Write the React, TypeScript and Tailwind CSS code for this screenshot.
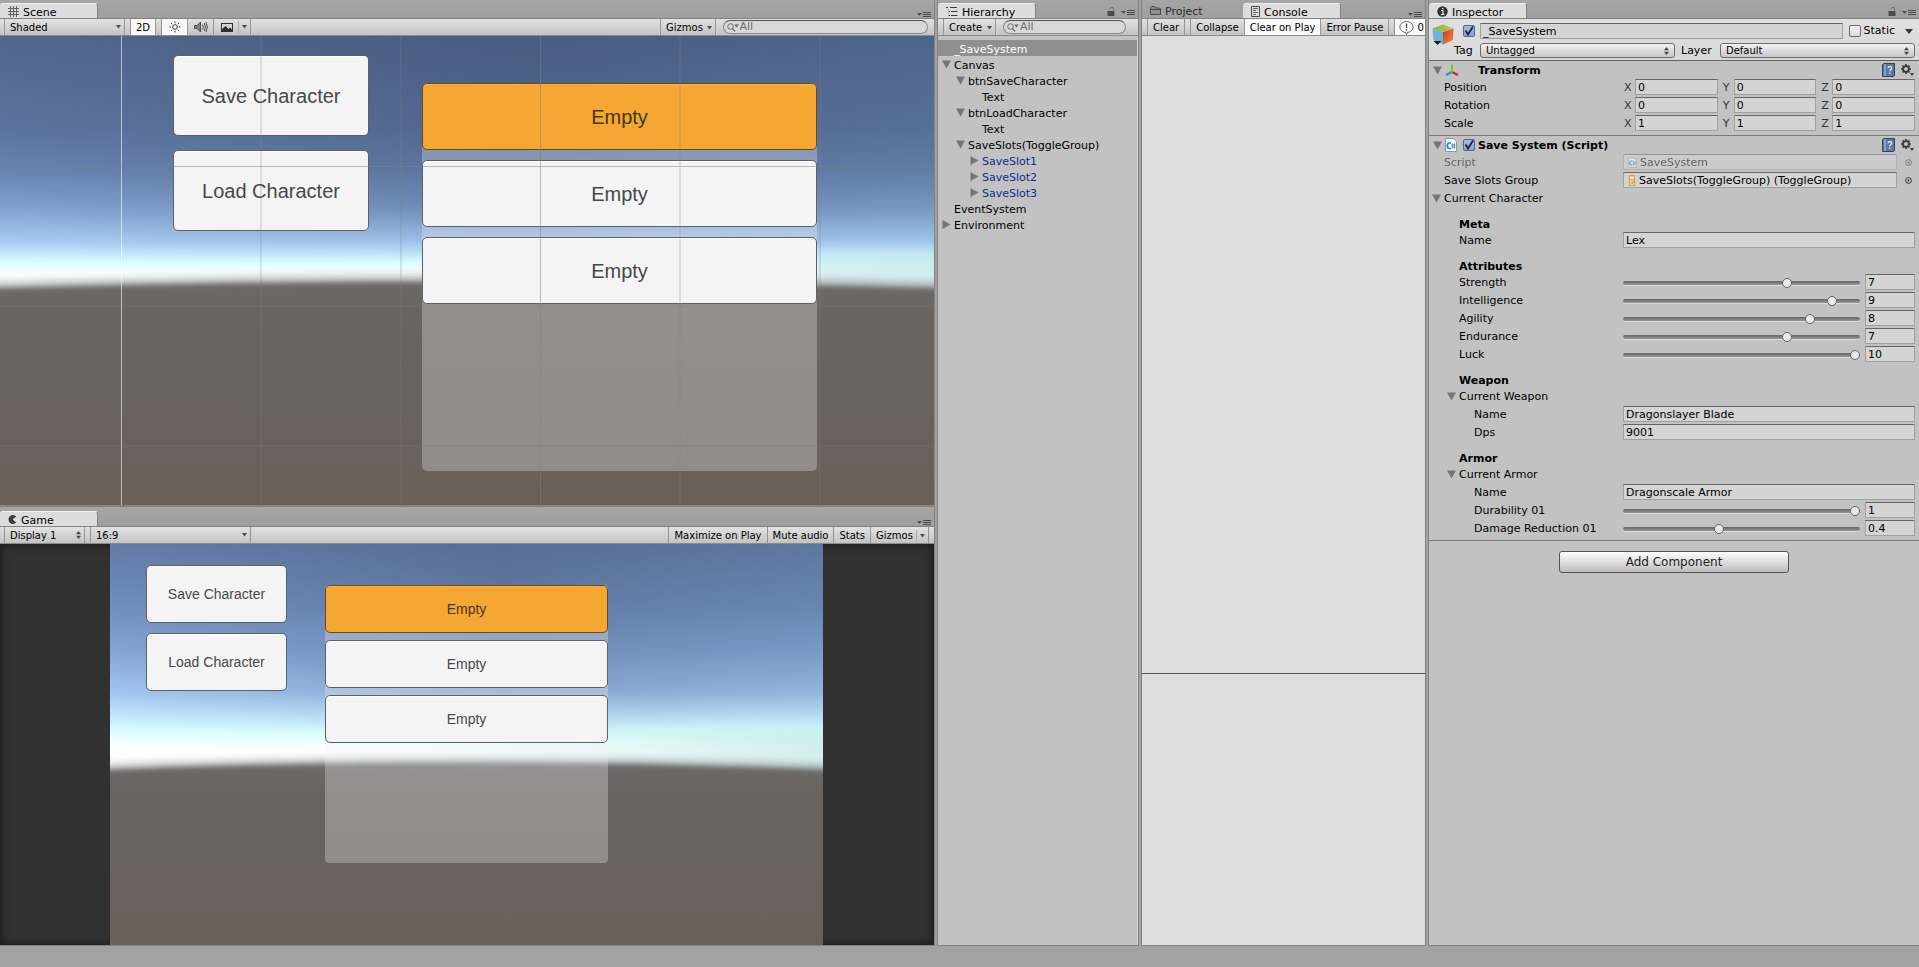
import React, { useId, type ReactNode } from 'react';

/* ---------- icons ---------- */

const Caret = ({ className = 'text-[#4a4a4a]' }: { className?: string }) => (
  <svg width="5" height="4" viewBox="0 0 5 4" className={className} aria-hidden="true">
    <path d="M0 0h5L2.5 3.5z" fill="currentColor" />
  </svg>
);

const UpDown = () => (
  <svg width="5" height="8" viewBox="0 0 5 8" aria-hidden="true">
    <path d="M0 3.2h5L2.5 0zM0 4.8h5L2.5 8z" fill="#4a4a4a" />
  </svg>
);

const Fold = ({ open }: { open: boolean }) => (
  <svg width="9" height="9" viewBox="0 0 9 9" aria-hidden="true">
    <path d={open ? 'M0 0.5h9L4.5 8.5z' : 'M0.5 0v9L8.5 4.5z'} fill="#757575" />
  </svg>
);

const GridIcon = () => (
  <svg width="11" height="11" viewBox="0 0 11 11" stroke="#4c4c4c" aria-hidden="true">
    <path d="M2.5 0v11M5.5 0v11M8.5 0v11M0 2.5h11M0 5.5h11M0 8.5h11" opacity="0.85" />
  </svg>
);

const PacIcon = () => (
  <svg width="9" height="9" viewBox="0 0 9 9" aria-hidden="true">
    <path d="M8.2 1.6A4.4 4.4 0 1 0 8.2 7.4L4.6 4.5z" fill="#3c3c3c" />
  </svg>
);

const TreeIcon = () => (
  <svg width="12" height="9" viewBox="0 0 12 9" stroke="#3c3c3c" aria-hidden="true">
    <path d="M0 0.5h2M4 0.5h7M2.5 4.5h1.5M5 4.5h6.5M2.5 8.5h1.5M5 8.5h6.5" />
    <path d="M2.5 2v1M2.5 6v1" opacity="0.5" />
  </svg>
);

const FolderIcon = () => (
  <svg width="11" height="9" viewBox="0 0 11 9" aria-hidden="true">
    <path d="M0.5 8.5V1.5L1.5 0.5h3l1 1.5h4l1 1v5.500z" fill="#8f8f8f" stroke="#4a4a4a" />
    <path d="M1 3.5h9" stroke="#4a4a4a" />
  </svg>
);

const PageIcon = () => (
  <svg width="9" height="11" viewBox="0 0 9 11" fill="none" stroke="#4a4a4a" aria-hidden="true">
    <path d="M0.5 0.5h8v10h-8z" />
    <path d="M2 2.5h5M2 4.5h3M2 6.5h5M2 8.5h3" opacity="0.8" />
  </svg>
);

const InfoIcon = () => (
  <svg width="11" height="11" viewBox="0 0 11 11" aria-hidden="true">
    <circle cx="5.5" cy="5.5" r="5.2" fill="#333" />
    <path d="M4 4.5h2V8.5M4 8.5h3.500M5 2.5h1.500" stroke="#eee" strokeWidth="1.2" fill="none" />
  </svg>
);

const LockIcon = () => (
  <svg width="8" height="9" viewBox="0 0 8 9" aria-hidden="true">
    <path d="M0.5 4h7v5h-7z" fill="#4c4c4c" />
    <path d="M6.500 4.500V2.500a1.700 1.900 0 0 0-3.600-0.600" stroke="#6a6a6a" fill="none" />
  </svg>
);

const MenuIcon = () => (
  <svg width="14" height="6" viewBox="0 0 14 6" aria-hidden="true">
    <path d="M0 1h5L2.5 3.8z" fill="#4a4a4a" />
    <path d="M6 0.5h8M6 2.5h8M6 4.5h8" stroke="#4a4a4a" />
  </svg>
);

const SunIcon = () => (
  <svg width="12" height="12" viewBox="0 0 12 12" fill="none" stroke="#3a3a3a" aria-hidden="true">
    <circle cx="6" cy="6" r="2.3" />
    <path d="M6 0.500v1.700M6 9.800v1.700M0.500 6h1.700M9.800 6h1.700M2.100 2.100l1.200 1.200M8.700 8.700l1.200 1.200M2.100 9.900l1.200-1.200M8.700 3.300l1.200-1.200" />
  </svg>
);

const SpeakerIcon = () => (
  <svg width="14" height="12" viewBox="0 0 14 12" fill="none" stroke="#4c4c4c" aria-hidden="true">
    <path d="M0.500 4.500h2.500L6.500 1v10L3 7.500H0.500z" fill="#808080" />
    <path d="M8.500 3.500q1.500 2.500 0 5M10.300 2q2.300 4 0 8M12 1q2.800 5 0 10" />
  </svg>
);

const ImageIcon = () => (
  <svg width="12" height="9" viewBox="0 0 12 9" aria-hidden="true">
    <path d="M0 0h12v9H0z" fill="#2f2f2f" />
    <path d="M1 1h10v5.500L9 4.500 7.500 6 4.500 3 1 6z" fill="#d4d4d4" />
  </svg>
);

const SearchIcon = () => (
  <svg width="12" height="9" viewBox="0 0 12 9" fill="none" stroke="#6c6c6c" className="shrink-0" aria-hidden="true">
    <circle cx="3.5" cy="3.5" r="2.8" />
    <path d="M5.5 5.5L8 8.5" strokeWidth="1.3" />
    <path d="M7 1.5h5L9.5 4.5z" fill="#6c6c6c" stroke="none" />
  </svg>
);

const CubeIcon = () => (
  <svg width="22" height="22" viewBox="0 0 22 22" aria-hidden="true">
    <defs>
      <linearGradient id="cubeRight" x1="0" y1="0" x2="1" y2="1">
        <stop offset="0" stopColor="#c43c10" />
        <stop offset="1" stopColor="#f58a4c" />
      </linearGradient>
      <linearGradient id="cubeTop" x1="0" y1="0" x2="1" y2="0">
        <stop offset="0" stopColor="#8fae3c" />
        <stop offset="1" stopColor="#b5cf55" />
      </linearGradient>
    </defs>
    <path d="M0.5 4.5L11 8v12.500L1.500 16z" fill="#6cb4dc" />
    <path d="M21.500 4.500L11 8v12.500L21 16z" fill="url(#cubeRight)" />
    <path d="M0.500 4.500L11 0.500l10.500 4L11 8z" fill="url(#cubeTop)" />
    <path d="M1.500 17h8L5.500 21z" fill="#1e1e1e" />
  </svg>
);

const AxesIcon = () => (
  <svg width="14" height="13" viewBox="0 0 14 13" strokeWidth="2" fill="none" aria-hidden="true">
    <path d="M7 8L1 11" stroke="#2a8fd0" />
    <path d="M7 8l6 3" stroke="#d8201c" />
    <path d="M7 8.500V0.500" stroke="#84c41c" />
  </svg>
);

const ScriptIcon = ({ size = 'w-[12px] h-[14px]' }: { size?: string }) => (
  <svg viewBox="0 0 12 14" className={size} aria-hidden="true">
    <path d="M0.500 0.500h8l3 3v10h-11z" fill="#f4f8fa" stroke="#8b9aa3" />
    <path d="M6 5H4.500a2 2.500 0 0 0 0 5.500H6" fill="none" stroke="#1c88b8" strokeWidth="1.6" />
    <path d="M7.500 5.500v5M9.500 5.500v5M6.500 7h4M6.500 9h4" stroke="#1c88b8" strokeWidth="0.8" />
  </svg>
);

const ToggleGroupIcon = () => (
  <svg width="8" height="11" viewBox="0 0 8 11" className="shrink-0" aria-hidden="true">
    <path d="M1.500 0.800h5v9.500h-5zM1.500 5h5" fill="#ececec" stroke="#e8a33c" strokeWidth="1.4" />
    <path d="M3 7.500l1 1 1.500-2" stroke="#666" fill="none" />
  </svg>
);

const HelpBookIcon = () => (
  <svg width="13" height="14" viewBox="0 0 13 14" aria-hidden="true">
    <path d="M0.500 1.500L2 0.500h10.500v12L11 13.500H0.500z" fill="#5f789f" stroke="#33435e" />
    <path d="M3 1v12" stroke="#c9d6e8" strokeWidth="0.8" />
    <path d="M6 5.200c0-2.200 3.600-2.200 3.600 0 0 1.500-1.800 1.500-1.800 3M7.800 9.600v1.400" stroke="#eef3fa" strokeWidth="1.2" fill="none" />
  </svg>
);

const GearIcon = () => (
  <svg width="13" height="12" viewBox="0 0 13 12" aria-hidden="true">
    <g stroke="#3a3a3a" fill="none" strokeWidth="1.7">
      <circle cx="5" cy="5" r="2.9" />
      <path d="M5 0v2M5 8v2M0 5h2M8 5h2M1.500 1.500l1.300 1.300M7.200 7.200l1.300 1.300M1.500 8.500l1.300-1.300M7.200 2.800l1.300-1.300" />
    </g>
    <path d="M9 9h4l-2 3z" fill="#3a3a3a" />
  </svg>
);

const PickerIcon = () => (
  <svg width="7" height="7" viewBox="0 0 7 7" aria-hidden="true">
    <circle cx="3.500" cy="3.500" r="2.900" fill="none" stroke="#2a2a2a" strokeWidth="0.9" />
    <circle cx="3.500" cy="3.500" r="0.900" fill="#2a2a2a" />
  </svg>
);

const WarnBubble = () => (
  <svg width="15" height="14" viewBox="0 0 15 14" aria-hidden="true">
    <ellipse cx="7.500" cy="6" rx="6.700" ry="5.500" fill="#fff" stroke="#5a5a5a" strokeWidth="0.9" />
    <path d="M6 11l1.500 2.500L9 11" fill="#fff" stroke="#5a5a5a" strokeWidth="0.9" />
    <path d="M7.500 2.500v4.500M7.500 8.200v1.500" stroke="#555" strokeWidth="1.5" />
  </svg>
);

/* ---------- dock chrome ---------- */

const Tab = ({ icon, label, active = false }: { icon: ReactNode; label: string; active?: boolean }) => (
  <button
    type="button"
    role="tab"
    aria-selected={active}
    className={
      active
        ? 'flex h-[15px] w-[98px] items-center gap-1 rounded-t-[3px] border-t border-r border-t-[#eeeeee] border-r-[#828282] bg-linear-to-b from-[#dcdcdc] to-[#dedede] pl-2 text-[11px] leading-[13px]'
        : 'flex h-[15px] w-[101px] items-center gap-1 pl-2 text-[11px] leading-[13px] text-[#2c2c2c]'
    }
  >
    {icon}
    <span className="pt-0.5">{label}</span>
  </button>
);

const Strip = ({ children, lock = false }: { children: ReactNode; lock?: boolean }) => (
  <div className="flex h-[19px] shrink-0 items-end justify-between border-b border-[#828282] bg-linear-to-b from-[#a5a5a5] to-[#9f9f9f]">
    <div role="tablist" className="flex">
      {children}
    </div>
    <div className="flex items-center gap-1.5 pr-[3px]">
      {lock && (
        <button type="button" aria-label="Lock" className="pb-0.5">
          <LockIcon />
        </button>
      )}
      <button type="button" aria-label="Panel menu">
        <MenuIcon />
      </button>
    </div>
  </div>
);

const Toolbar = ({ children }: { children: ReactNode }) => (
  <div className="flex h-[17px] shrink-0 items-stretch overflow-hidden border-b border-[#8a8a8a] bg-linear-to-b from-[#e2e2e2] to-[#c3c3c3] pl-1 text-[10px] leading-[15px] whitespace-nowrap">
    {children}
  </div>
);

const toolBtn = 'flex shrink-0 items-center justify-center border-r border-[#959595] px-[5px] pt-px';
const toolBtnFirst = 'flex shrink-0 items-center justify-center border-x border-[#959595] px-[5px] pt-px';

const ToolSelect = ({
  label,
  value,
  width,
  arrow,
}: {
  label: string;
  value: string;
  width: string;
  arrow: ReactNode;
}) => (
  <div className={`relative shrink-0 border-x border-[#959595] ${width}`}>
    <select
      aria-label={label}
      className="h-full w-full appearance-none bg-transparent pt-px pl-[5px] text-[10px] leading-[15px] outline-none"
    >
      <option>{value}</option>
    </select>
    <span className="pointer-events-none absolute inset-y-0 right-[3px] flex items-center">{arrow}</span>
  </div>
);

const Search = ({ label, width }: { label: string; width: string }) => (
  <label
    className={`my-px flex items-center gap-px rounded-full border border-[#8a8a8a] border-t-[#555] bg-[#d8d8d8] pl-[3px] ${width}`}
  >
    <SearchIcon />
    <input
      type="text"
      aria-label={label}
      placeholder="All"
      className="w-full min-w-0 bg-transparent text-[11px] leading-3 outline-none placeholder:text-[#6e6e6e]"
    />
  </label>
);

/* ---------- rendered world ---------- */

type SkyProps = { id: 'scene' | 'game'; edge: number; peak: number; haze: number };

const skyStops: Record<'scene' | 'game', [number, string][]> = {
  scene: [
    [0, '#51668d'],
    [0.38, '#5b739e'],
    [0.56, '#6983b0'],
    [0.72, '#82a2d0'],
    [0.86, '#a8ccf3'],
    [0.92, '#cbeeff'],
    [0.95, '#dcffff'],
    [1, '#ffffff'],
  ],
  game: [
    [0, '#637ca8'],
    [0.3, '#718ebc'],
    [0.52, '#86a5d4'],
    [0.72, '#a3c6f0'],
    [0.82, '#bfe3fe'],
    [0.91, '#dcffff'],
    [1, '#ffffff'],
  ],
};

const Sky = ({ id, edge, peak, haze }: SkyProps) => {
  const horizon = (lift: number) =>
    `M-50 ${edge - lift}Q500 ${2 * peak - edge - lift} 1050 ${edge - lift}V1100H-50z`;
  return (
    <svg
      viewBox="0 0 1000 1000"
      preserveAspectRatio="none"
      className="absolute inset-0 h-full w-full"
      aria-hidden="true"
    >
      <defs>
        <linearGradient id={`${id}-sky`} gradientUnits="userSpaceOnUse" x1="0" y1="0" x2="0" y2={haze}>
          {skyStops[id].map(([o, c]) => (
            <stop key={o} offset={o} stopColor={c} />
          ))}
        </linearGradient>
        <linearGradient id={`${id}-shade`} x1="0" y1="0" x2="1" y2="0">
          <stop offset="0" stopColor="#33425e" stopOpacity="0" />
          <stop offset="0.55" stopColor="#33425e" stopOpacity="0.26" />
          <stop offset="1" stopColor="#3f5c78" stopOpacity="0.16" />
        </linearGradient>
        <linearGradient id={`${id}-fade`} x1="0" y1="0" x2="0" y2="1">
          <stop offset="0" stopColor="#fff" />
          <stop offset="0.7" stopColor="#fff" />
          <stop offset="0.95" stopColor="#000" />
        </linearGradient>
        <mask id={`${id}-mask`}>
          <rect width="1000" height={haze} fill={`url(#${id}-fade)`} />
        </mask>
        <linearGradient id={`${id}-tint`} x1="0" y1="0" x2="1" y2="0">
          <stop offset="0.45" stopColor="#c6ecec" stopOpacity="0" />
          <stop offset="1" stopColor="#c2e6e6" stopOpacity="0.7" />
        </linearGradient>
        <linearGradient id={`${id}-ground`} gradientUnits="userSpaceOnUse" x1="0" y1={peak} x2="0" y2="1000">
          <stop offset="0" stopColor="#6c6867" />
          <stop offset="0.2" stopColor="#69635d" />
          <stop offset="1" stopColor="#6a605a" />
        </linearGradient>
        <filter id={`${id}-soft`} x="-5%" y="-10%" width="110%" height="120%">
          <feGaussianBlur stdDeviation="0 6" />
        </filter>
        <filter id={`${id}-softer`} x="-5%" y="-10%" width="110%" height="120%">
          <feGaussianBlur stdDeviation="0 10" />
        </filter>
      </defs>
      <rect width="1000" height="1000" fill={`url(#${id}-sky)`} />
      <rect width="1000" height={haze} fill={`url(#${id}-shade)`} mask={`url(#${id}-mask)`} />
      <rect y={haze * 0.9} width="1000" height="200" fill={`url(#${id}-tint)`} filter={`url(#${id}-softer)`} />
      <path d={horizon(22)} fill="#7d8483" fillOpacity="0.6" filter={`url(#${id}-softer)`} />
      <path d={horizon(10)} fill={`url(#${id}-ground)`} filter={`url(#${id}-soft)`} />
    </svg>
  );
};

const SceneGrid = () => (
  <svg
    viewBox="0 0 934 469"
    preserveAspectRatio="none"
    className="pointer-events-none absolute inset-0 h-full w-full"
    aria-hidden="true"
  >
    <path d="M121.500 0V469" stroke="#ffffff" strokeOpacity="0.6" />
    <path d="M261 0V469M401 0V469M680 0V469M820 0V469" stroke="#808080" strokeOpacity="0.2" strokeWidth="2" />
    <path d="M540.500 0V469M0 130.500H934" stroke="#808080" strokeOpacity="0.5" />
    <path d="M0 270H934M0 410H934" stroke="#808080" strokeOpacity="0.18" strokeWidth="2" />
  </svg>
);

const uiButton =
  'flex w-full items-center justify-center rounded-[5px] border border-[#5e6064] bg-[#f4f4f4] text-[#484848] shadow-[inset_0_1px_0_#ffffff]';
const uiSlotOn =
  'flex w-full items-center justify-center rounded-[5px] border border-[#6b4a1c] bg-[#f5a733] text-[#433620] shadow-[inset_0_1px_0_#ffb440]';

const slots = ['SaveSlot1', 'SaveSlot2', 'SaveSlot3'];

const CanvasUi = ({ size }: { size: 'scene' | 'game' }) => {
  const scene = size === 'scene';
  return (
    <div
      className={
        scene
          ? "relative grid grid-cols-[173fr_196fr_53fr_395fr_117fr] items-start font-['Liberation_Sans',Arial,sans-serif] text-[20px] leading-6"
          : "relative grid grid-cols-[36fr_141fr_38fr_283fr_215fr] items-start font-['Liberation_Sans',Arial,sans-serif] text-[14px] leading-4"
      }
    >
      <div className={scene ? 'col-start-2 flex flex-col gap-3.5 pt-[19px]' : 'col-start-2 flex flex-col gap-2.5 pt-[21px]'}>
        {['Save Character', 'Load Character'].map((t) => (
          <button key={t} type="button" className={`${uiButton} ${scene ? 'h-[81px]' : 'h-[58px]'}`}>
            {t}
          </button>
        ))}
      </div>
      <div className={scene ? 'col-start-4 pt-[47px]' : 'col-start-4 pt-[41px]'}>
        <div
          className={
            scene
              ? 'flex h-[388px] flex-col gap-2.5 rounded-[5px] bg-[#f0f2f4]/30'
              : 'flex h-[278px] flex-col gap-[7px] rounded-[4px] bg-[#f0f2f4]/30'
          }
        >
          {slots.map((s, i) => (
            <button
              key={s}
              type="button"
              aria-pressed={i === 0}
              className={`${i === 0 ? uiSlotOn : uiButton} ${scene ? 'h-[67px]' : 'h-[48px]'}`}
            >
              Empty
            </button>
          ))}
        </div>
      </div>
    </div>
  );
};

/* ---------- panels ---------- */

const ScenePanel = () => (
  <section className="flex min-h-0 flex-col border-r border-[#828282]">
    <Strip>
      <Tab icon={<GridIcon />} label="Scene" active />
    </Strip>
    <Toolbar>
      <ToolSelect label="Draw mode" value="Shaded" width="w-[121px]" arrow={<Caret />} />
      <button type="button" className="ml-[5px] w-[26px] shrink-0 border-x border-[#959595] bg-[#f8f8f8] pt-px">
        2D
      </button>
      <button
        type="button"
        aria-label="Scene lighting"
        className="ml-[5px] flex w-[27px] shrink-0 items-center justify-center border-x border-[#959595] bg-[#f8f8f8]"
      >
        <SunIcon />
      </button>
      <button type="button" aria-label="Scene audio" className="flex w-[26px] shrink-0 items-center justify-center border-r border-[#959595]">
        <SpeakerIcon />
      </button>
      <button
        type="button"
        aria-label="Scene effects"
        className="flex w-[37px] shrink-0 items-center justify-between border-r border-[#959595] pr-[3px] pl-[7px]"
      >
        <ImageIcon />
        <span className="flex h-3 items-center border-l border-[#a8a8a8] pl-[3px]">
          <Caret />
        </span>
      </button>
      <div className="flex-1" />
      <button type="button" className="flex w-[56px] shrink-0 items-center justify-between border-x border-[#959595] pt-px pr-[3px] pl-[5px]">
        Gizmos <Caret />
      </button>
      <div className="flex w-[218px] justify-center">
        <Search label="Search scene" width="w-[205px]" />
      </div>
    </Toolbar>
    <div className="relative min-h-0 flex-1 overflow-hidden border-b-2 border-[#828282]">
      <Sky id="scene" edge={551} peak={534} haze={510} />
      <CanvasUi size="scene" />
      <SceneGrid />
    </div>
  </section>
);

const GamePanel = () => (
  <section className="flex min-h-0 flex-col border-r border-[#828282] pt-px">
    <Strip>
      <Tab icon={<PacIcon />} label="Game" active />
    </Strip>
    <Toolbar>
      <ToolSelect label="Display" value="Display 1" width="w-[81px]" arrow={<UpDown />} />
      <div className="w-[5px] shrink-0" />
      <ToolSelect label="Aspect ratio" value="16:9" width="w-[161px]" arrow={<Caret />} />
      <div className="flex-1" />
      <button type="button" className={toolBtnFirst}>
        Maximize on Play
      </button>
      <button type="button" className={toolBtn}>
        Mute audio
      </button>
      <button type="button" className={toolBtn}>
        Stats
      </button>
      <button
        type="button"
        className="mr-[5px] flex w-[58px] shrink-0 items-center justify-between border-r border-[#959595] pt-px pr-[3px] pl-[5px]"
      >
        Gizmos
        <span className="flex h-3 items-center border-l border-[#a8a8a8] pl-[3px]">
          <Caret />
        </span>
      </button>
    </Toolbar>
    <div className="grid min-h-0 flex-1 grid-cols-[110fr_713fr_111fr] border-b border-[#828282] bg-[#313131] shadow-[inset_0_0_10px_#161616]">
      <div className="relative col-start-2 overflow-hidden">
        <Sky id="game" edge={577} peak={556} haze={515} />
        <CanvasUi size="game" />
      </div>
    </div>
  </section>
);

type TreeNode = { name: string; depth: number; open?: boolean; prefab?: boolean; selected?: boolean };

const nodes: TreeNode[] = [
  { name: '_SaveSystem', depth: 0, selected: true },
  { name: 'Canvas', depth: 0, open: true },
  { name: 'btnSaveCharacter', depth: 1, open: true },
  { name: 'Text', depth: 2 },
  { name: 'btnLoadCharacter', depth: 1, open: true },
  { name: 'Text', depth: 2 },
  { name: 'SaveSlots(ToggleGroup)', depth: 1, open: true },
  { name: 'SaveSlot1', depth: 2, open: false, prefab: true },
  { name: 'SaveSlot2', depth: 2, open: false, prefab: true },
  { name: 'SaveSlot3', depth: 2, open: false, prefab: true },
  { name: 'EventSystem', depth: 0 },
  { name: 'Environment', depth: 0, open: false },
];

const depthPad = ['pl-1', 'pl-[18px]', 'pl-8'];

const HierarchyPanel = () => (
  <section className="flex min-h-0 flex-col border-x border-b border-[#828282]">
    <Strip lock>
      <Tab icon={<TreeIcon />} label="Hierarchy" active />
    </Strip>
    <Toolbar>
      <button
        type="button"
        className="ml-px flex w-[53px] shrink-0 items-center justify-between border-x border-[#959595] pt-px pr-[3px] pl-[5px]"
      >
        Create <Caret />
      </button>
      <div className="flex flex-1 pr-3 pl-[7px]">
        <Search label="Search hierarchy" width="flex-1" />
      </div>
    </Toolbar>
    <ul role="tree" aria-label="Hierarchy" className="min-h-0 flex-1 border-r border-[#d4d4d4] bg-[#c2c2c2] pt-1 text-[11px] leading-3">
      {nodes.map((n, i) => (
        <li
          key={i}
          role="treeitem"
          aria-expanded={n.open}
          aria-selected={!!n.selected}
          className={`flex h-4 items-center gap-[3px] ${depthPad[n.depth]} ${
            n.selected ? 'bg-[#8f8f8f] text-white' : n.prefab ? 'text-[#0a2f94]' : ''
          }`}
        >
          <span className="w-[9px]">{n.open !== undefined && <Fold open={n.open} />}</span>
          <span className="pt-1">{n.name}</span>
        </li>
      ))}
    </ul>
  </section>
);

const ConsolePanel = () => (
  <section className="flex min-h-0 flex-col border-x border-b border-[#828282]">
    <Strip>
      <Tab icon={<FolderIcon />} label="Project" />
      <Tab icon={<PageIcon />} label="Console" active />
    </Strip>
    <Toolbar>
      <button type="button" className={`${toolBtnFirst} ml-px`}>
        Clear
      </button>
      <button type="button" className={`${toolBtnFirst} ml-[5px]`}>
        Collapse
      </button>
      <button type="button" className={`${toolBtn} bg-[#fafafa]`}>
        Clear on Play
      </button>
      <button type="button" className={toolBtn}>
        Error Pause
      </button>
      <button
        type="button"
        className="ml-[5px] flex shrink-0 items-center gap-[3px] border-l border-[#959595] bg-[#f8f8f8] pt-px pr-2 pl-1"
      >
        <WarnBubble />0
      </button>
    </Toolbar>
    <div className="grid min-h-0 flex-1 grid-rows-[638fr_271fr] bg-[#dedede]">
      <div className="border-b border-[#555]" />
      <div />
    </div>
  </section>
);

const fieldCls =
  'h-4 w-full min-w-0 border border-[#a0a0a0] border-t-[#666] bg-[#d4d4d4] px-0.5 pt-px text-[11px] leading-[13px] outline-none';

const Check = ({ label, on }: { label: string; on: boolean }) => (
  <span className="relative flex h-3 w-3 shrink-0">
    <input
      type="checkbox"
      aria-label={label}
      defaultChecked={on}
      className="peer h-3 w-3 appearance-none rounded-[2px] border border-[#6a6a6a] bg-linear-to-b from-[#f2f2f2] to-[#dcdcdc] checked:border-[#53668a] checked:from-[#a4bade] checked:to-[#8aa5d2]"
    />
    <svg viewBox="0 0 12 12" className="pointer-events-none absolute inset-0 hidden peer-checked:block" aria-hidden="true">
      <path d="M2.5 5.5L5 9.5L10 1.5" fill="none" stroke="#1d2740" strokeWidth="1.9" />
    </svg>
  </span>
);

const Popup = ({ id, value }: { id: string; value: string }) => (
  <span className="relative flex h-[15px] flex-1">
    <select
      id={id}
      className="h-[15px] w-full appearance-none rounded-[3px] border border-[#6c6c6c] bg-linear-to-b from-[#f2f2f2] to-[#c8c8c8] pl-[5px] text-[10px] leading-3 outline-none"
    >
      <option>{value}</option>
    </select>
    <span className="pointer-events-none absolute inset-y-0 right-1.5 flex items-center">
      <UpDown />
    </span>
  </span>
);

const indentPad = ['pl-[15px]', 'pl-[30px]', 'pl-[45px]'];

const Row = ({
  label,
  htmlFor,
  indent = 0,
  muted = false,
  children,
}: {
  label: string;
  htmlFor?: string;
  indent?: number;
  muted?: boolean;
  children: ReactNode;
}) => (
  <div className={`mb-0.5 flex h-4 items-center ${muted ? 'opacity-50' : ''}`}>
    <label htmlFor={htmlFor} className={`w-[194px] shrink-0 truncate pt-0.5 ${indentPad[indent]}`}>
      {label}
    </label>
    {children}
  </div>
);

const TextRow = ({ label, value, indent }: { label: string; value: string; indent: number }) => {
  const id = useId();
  return (
    <Row label={label} indent={indent} htmlFor={id}>
      <input id={id} type="text" defaultValue={value} className={fieldCls} />
    </Row>
  );
};

const SliderRow = ({ label, value, max, indent }: { label: string; value: number; max: number; indent: number }) => {
  const id = useId();
  return (
    <Row label={label} indent={indent} htmlFor={id}>
      <input
        id={id}
        type="range"
        min={0}
        max={max}
        step="any"
        defaultValue={value}
        className="h-4 min-w-0 flex-1 appearance-none bg-transparent pt-px outline-none [&::-webkit-slider-runnable-track]:h-1 [&::-webkit-slider-runnable-track]:rounded-full [&::-webkit-slider-runnable-track]:bg-linear-to-b [&::-webkit-slider-runnable-track]:from-[#646464] [&::-webkit-slider-runnable-track]:to-[#999999] [&::-webkit-slider-runnable-track]:shadow-[0_1px_0_#dddddd] [&::-webkit-slider-thumb]:-mt-[3px] [&::-webkit-slider-thumb]:h-2.5 [&::-webkit-slider-thumb]:w-2.5 [&::-webkit-slider-thumb]:appearance-none [&::-webkit-slider-thumb]:rounded-full [&::-webkit-slider-thumb]:border [&::-webkit-slider-thumb]:border-[#636363] [&::-webkit-slider-thumb]:bg-[#e8e8e8]"
      />
      <div className="ml-[5px] w-[50px] shrink-0">
        <input type="text" aria-label={`${label} value`} defaultValue={String(value)} className={fieldCls} />
      </div>
    </Row>
  );
};

const VectorRow = ({ label, value }: { label: string; value: string }) => (
  <Row label={label}>
    <div className="flex flex-1 gap-1">
      {['X', 'Y', 'Z'].map((axis) => (
        <label key={axis} className="flex flex-1 items-center text-[#333]">
          <span className="w-3 shrink-0 pt-px pl-px">{axis}</span>
          <input type="text" aria-label={`${label} ${axis}`} defaultValue={value} className={`${fieldCls} text-black`} />
        </label>
      ))}
    </div>
  </Row>
);

const ObjectRow = ({ label, value, icon, muted }: { label: string; value: string; icon: ReactNode; muted?: boolean }) => {
  const id = useId();
  return (
    <Row label={label} htmlFor={id} muted={muted}>
      <div className="flex h-4 flex-1 items-center gap-[3px] border border-[#a0a0a0] border-t-[#666] bg-[#d4d4d4] pl-1">
        {icon}
        <input
          id={id}
          readOnly
          disabled={muted}
          value={value}
          className="w-full min-w-0 bg-transparent pt-px text-[11px] leading-[13px] outline-none"
        />
      </div>
      <button type="button" aria-label={`Pick ${label}`} className="flex w-[18px] justify-end pr-[3px]">
        <PickerIcon />
      </button>
    </Row>
  );
};

const FoldRow = ({ label, indent }: { label: string; indent: 0 | 1 }) => (
  <button
    type="button"
    aria-expanded="true"
    className={`mb-0.5 flex h-4 items-center gap-[3px] ${indent === 0 ? 'pl-[3px]' : 'pl-[18px]'}`}
  >
    <Fold open />
    <span className="pt-0.5">{label}</span>
  </button>
);

const GroupHead = ({ children }: { children: ReactNode }) => (
  <h3 className="mt-2 h-4 pt-0.5 pl-[30px] leading-[14px] font-bold">{children}</h3>
);

const ComponentHead = ({ icon, check, title }: { icon: ReactNode; check?: ReactNode; title: string }) => (
  <div className="flex h-[18px] items-center pl-1">
    <button type="button" aria-label={`Collapse ${title}`} className="w-3">
      <Fold open />
    </button>
    <span className="flex w-[18px]">{icon}</span>
    <span className="flex w-[15px]">{check}</span>
    <h2 className="flex-1 pt-0.5 font-bold">{title}</h2>
    <button type="button" aria-label="Help" className="mr-1.5">
      <HelpBookIcon />
    </button>
    <button type="button" aria-label="Settings" className="pr-px">
      <GearIcon />
    </button>
  </div>
);

const InspectorPanel = () => (
  <section className="flex min-h-0 flex-col border-b border-l border-[#828282] bg-[#c2c2c2]">
    <Strip lock>
      <Tab icon={<InfoIcon />} label="Inspector" active />
    </Strip>
    <div className="flex h-[42px] shrink-0 border-b border-[#666] bg-linear-to-b from-[#e0e0e0] to-[#d8d8d8] pl-[3px] text-[11px] leading-[14px]">
      <div className="pt-[5px]">
        <CubeIcon />
      </div>
      <div className="flex-1 pt-1 pr-1">
        <div className="flex h-4 items-center pl-[9px]">
          <Check label="Active" on />
          <div className="mr-1.5 ml-[5px] flex-1">
            <input type="text" aria-label="Object name" defaultValue="_SaveSystem" className={fieldCls} />
          </div>
          <label className="flex items-center gap-[3px]">
            <Check label="Static" on={false} />
            Static
          </label>
          <button type="button" aria-label="Static options" className="ml-2 px-0.5">
            <svg width="8" height="5" viewBox="0 0 8 5" aria-hidden="true">
              <path d="M0 0h8L4 5z" fill="#3a3a3a" />
            </svg>
          </button>
        </div>
        <div className="mt-1 flex h-[15px] items-center">
          <label htmlFor="tag" className="w-[26px] shrink-0">
            Tag
          </label>
          <Popup id="tag" value="Untagged" />
          <label htmlFor="layer" className="w-[45px] shrink-0 pl-1.5">
            Layer
          </label>
          <Popup id="layer" value="Default" />
        </div>
      </div>
    </div>
    <div className="border-b border-[#7a7a7a] pr-1 pb-0.5 text-[11px] leading-[14px]">
      <ComponentHead icon={<AxesIcon />} title="Transform" />
      <VectorRow label="Position" value="0" />
      <VectorRow label="Rotation" value="0" />
      <VectorRow label="Scale" value="1" />
    </div>
    <div className="flex flex-col border-b border-[#7a7a7a] pr-1 pb-0.5 text-[11px] leading-[14px]">
      <ComponentHead icon={<ScriptIcon />} check={<Check label="Enable Save System" on />} title="Save System (Script)" />
      <ObjectRow label="Script" value="SaveSystem" icon={<ScriptIcon size="w-[9px] h-[11px] shrink-0" />} muted />
      <ObjectRow label="Save Slots Group" value="SaveSlots(ToggleGroup) (ToggleGroup)" icon={<ToggleGroupIcon />} />
      <FoldRow label="Current Character" indent={0} />
      <GroupHead>Meta</GroupHead>
      <TextRow label="Name" value="Lex" indent={1} />
      <GroupHead>Attributes</GroupHead>
      <SliderRow label="Strength" value={7} max={10} indent={1} />
      <SliderRow label="Intelligence" value={9} max={10} indent={1} />
      <SliderRow label="Agility" value={8} max={10} indent={1} />
      <SliderRow label="Endurance" value={7} max={10} indent={1} />
      <SliderRow label="Luck" value={10} max={10} indent={1} />
      <GroupHead>Weapon</GroupHead>
      <FoldRow label="Current Weapon" indent={1} />
      <TextRow label="Name" value="Dragonslayer Blade" indent={2} />
      <TextRow label="Dps" value="9001" indent={2} />
      <GroupHead>Armor</GroupHead>
      <FoldRow label="Current Armor" indent={1} />
      <TextRow label="Name" value="Dragonscale Armor" indent={2} />
      <SliderRow label="Durability 01" value={1} max={1} indent={2} />
      <SliderRow label="Damage Reduction 01" value={0.4} max={1} indent={2} />
    </div>
    <button
      type="button"
      className="mt-2.5 h-[22px] w-[230px] self-center rounded-[3px] border border-[#555] bg-linear-to-b from-white to-[#bebcbe] text-[12px] leading-5 text-[#222]"
    >
      Add Component
    </button>
  </section>
);

export default function App() {
  return (
    <div className="flex h-screen min-h-[700px] flex-col overflow-hidden bg-[#a2a2a2] font-['DejaVu_Sans',Verdana,sans-serif] text-black">
      <main className="grid min-h-0 flex-1 grid-cols-[minmax(0,935fr)_minmax(0,202fr)_minmax(0,285fr)_minmax(0,491fr)] gap-0.5">
        <div className="grid min-h-0 grid-rows-[507fr_439fr]">
          <ScenePanel />
          <GamePanel />
        </div>
        <HierarchyPanel />
        <ConsolePanel />
        <InspectorPanel />
      </main>
      <footer className="h-[21px] shrink-0 bg-[#a2a2a2]" />
    </div>
  );
}
